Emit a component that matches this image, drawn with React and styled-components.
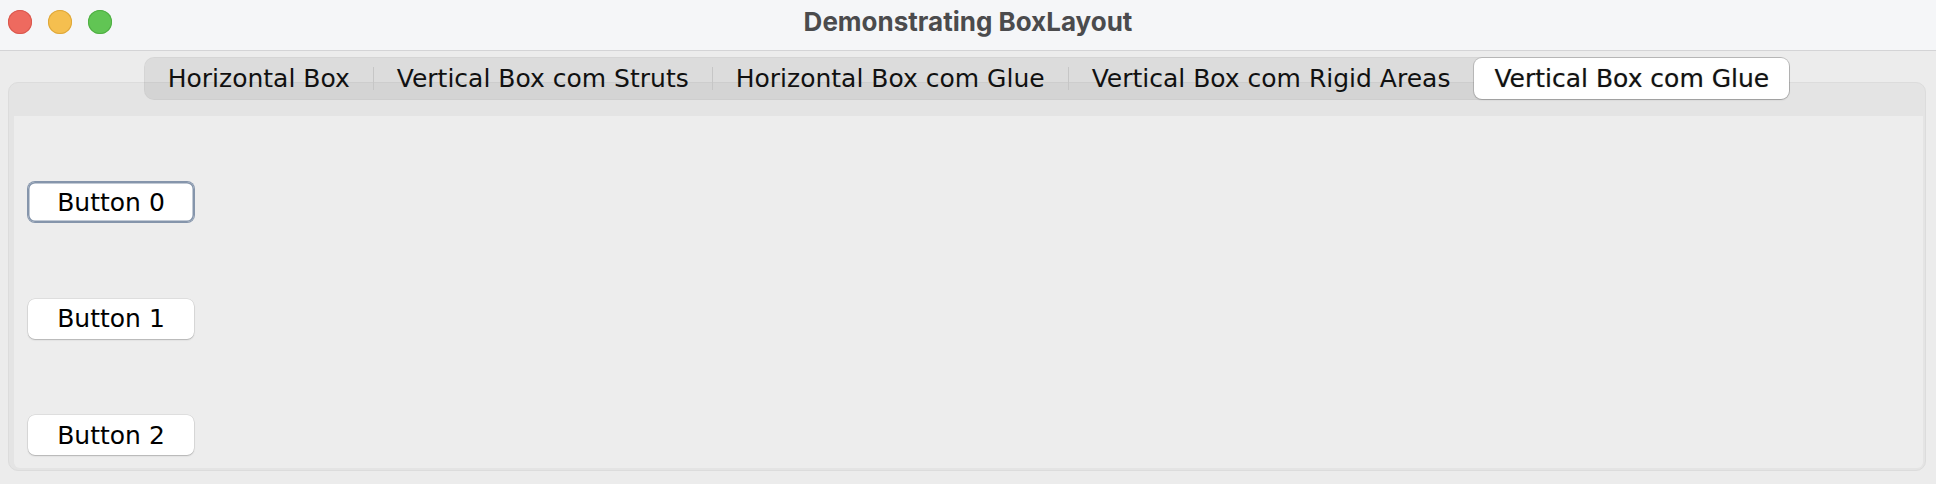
import React from "react";
import styled, { createGlobalStyle } from "styled-components";

const GlobalStyle = createGlobalStyle`
  html, body {
    margin: 0;
    padding: 0;
    background: #ececec;
  }
  * { box-sizing: border-box; }
`;

const Window = styled.div`
  width: 1936px;
  height: 484px;
  display: flex;
  flex-direction: column;
  background: #ececec;
  font-family: "DejaVu Sans", Verdana, sans-serif;
`;

const TitleBar = styled.div`
  height: 51px;
  flex: none;
  display: grid;
  grid-template-columns: 1fr auto 1fr;
  align-items: center;
  background: #f5f6f8;
  border-bottom: 1px solid #d4d4d6;
`;

const Lights = styled.div`
  display: flex;
  gap: 16px;
  padding-left: 8px;
  padding-bottom: 6px;
`;

const Light = styled.span`
  width: 24px;
  height: 24px;
  border-radius: 50%;
  background: ${(p) => p.$color};
  box-shadow: inset 0 0 0 1px ${(p) => p.$edge};
`;

const Title = styled.div`
  font-family: Inter, "Open Sans", sans-serif;
  font-weight: 700;
  font-size: 26px;
  color: #4b4b4d;
  padding-bottom: 8px;
`;

const Body = styled.div`
  flex: 1;
  display: flex;
  flex-direction: column;
  padding: 6px 10px 13px 8px;
`;

const TabStrip = styled.div`
  align-self: center;
  position: relative;
  z-index: 1;
  height: 43px;
  margin-bottom: -18px;
  display: flex;
  align-items: center;
  background: rgba(0, 0, 0, 0.065);
  border: 1px solid rgba(0, 0, 0, 0.03);
  border-radius: 10px;
`;

const Tab = styled.div`
  height: ${(p) => (p.$selected ? "41px" : "100%")};
  display: flex;
  align-items: center;
  padding: 0 ${(p) => (p.$selected ? "20px" : "23px")};
  font-size: 25px;
  color: #111;
  white-space: nowrap;
  border-radius: 8px;
  background: ${(p) => (p.$selected ? "#ffffff" : "transparent")};
  box-shadow: ${(p) =>
    p.$selected
      ? "0 0 0 1px rgba(0,0,0,0.14), 0 1px 2px rgba(0,0,0,0.12)"
      : "none"};
  text-shadow: ${(p) => (p.$selected ? "0 0 1px rgba(0,0,0,0.35)" : "none")};
`;

const Separator = styled.span`
  width: 1px;
  height: 23px;
  background: ${(p) => (p.$hidden ? "transparent" : "#c6c6c6")};
  flex: none;
`;

const Panel = styled.div`
  flex: 1;
  display: flex;
  flex-direction: column;
  background: #e4e4e4;
  border: 1px solid #dcdcdc;
  border-radius: 10px;
  padding: 33px 2px 2px 5px;
`;

const Content = styled.div`
  flex: 1;
  background: #ededed;
  border-radius: 0 0 6px 6px;
  display: flex;
  flex-direction: column;
  justify-content: space-between;
  align-items: flex-start;
  padding: 66px 14px 13px 14px;
`;

const Button = styled.button`
  width: 166px;
  height: 40px;
  border: none;
  border-radius: 7px;
  background: #ffffff;
  font-family: "DejaVu Sans", Verdana, sans-serif;
  font-size: 25px;
  color: #000;
  padding: 0;
  box-shadow: ${(p) =>
    p.$focused
      ? "0 0 0 1px #8595ab, inset 0 0 0 1.5px #8595ab"
      : "0 0 0 0.5px rgba(0,0,0,0.12), 0 1px 1.5px rgba(0,0,0,0.2)"};
`;

const tabs = [
  "Horizontal Box",
  "Vertical Box com Struts",
  "Horizontal Box com Glue",
  "Vertical Box com Rigid Areas",
  "Vertical Box com Glue",
];
const selectedIndex = 4;

export default function App() {
  return (
    <>
      <GlobalStyle />
      <Window>
        <TitleBar>
          <Lights>
            <Light $color="#ee6a5f" $edge="#d9584e" />
            <Light $color="#f5bf4f" $edge="#dea73a" />
            <Light $color="#61c554" $edge="#4fae43" />
          </Lights>
          <Title>Demonstrating BoxLayout</Title>
          <div />
        </TitleBar>
        <Body>
          <TabStrip>
            {tabs.map((t, i) => (
              <React.Fragment key={t}>
                {i > 0 && (
                  <Separator
                    $hidden={i === selectedIndex || i - 1 === selectedIndex}
                  />
                )}
                <Tab $selected={i === selectedIndex}>{t}</Tab>
              </React.Fragment>
            ))}
          </TabStrip>
          <Panel>
            <Content>
              <Button $focused>Button 0</Button>
              <Button>Button 1</Button>
              <Button>Button 2</Button>
            </Content>
          </Panel>
        </Body>
      </Window>
    </>
  );
}
